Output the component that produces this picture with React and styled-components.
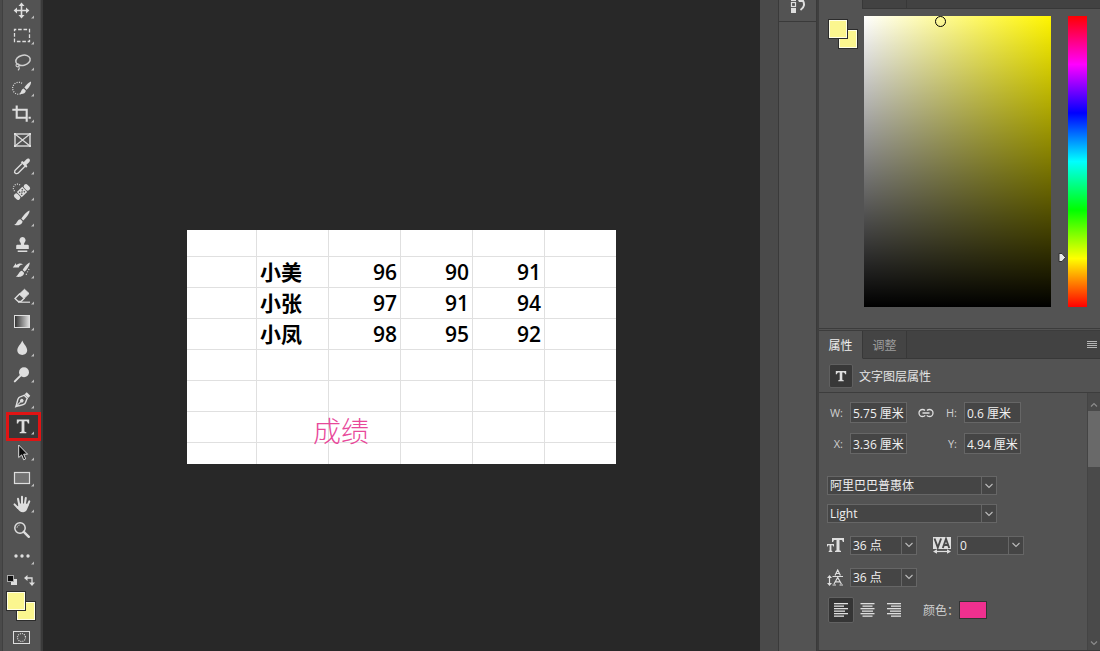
import React, { useState } from 'react';
import styled, { createGlobalStyle } from 'styled-components';

const GlobalStyle = createGlobalStyle`
  * {
    box-sizing: border-box;
  }
  body {
    margin: 0;
    background: #282828;
    font-family: 'Open Sans', 'Noto Sans CJK SC', sans-serif;
    font-size: 12px;
    color: #e4e4e4;
  }
  button, input, select {
    font: inherit;
    color: inherit;
  }
`;

const light = '#dedede';

const tools = [
  {
    name: 'Move',
    icon: (
      <>
        <path d="M11.5 6v13M5 12.5h13" stroke={light} strokeWidth="1.6" />
        <path d="M11.5 4.5l3 3.4h-6zM11.5 20.5l3-3.4h-6zM3.6 12.5l3.4-3v6zM19.4 12.5l-3.4-3v6z" fill={light} />
      </>
    ),
  },
  {
    name: 'Marquee',
    icon: <rect x="4.5" y="5.5" width="15" height="12" fill="none" stroke={light} strokeWidth="1.3" strokeDasharray="3.6 1.8" strokeDashoffset="1.8" />,
  },
  {
    name: 'Lasso',
    icon: (
      <g fill="none" stroke="#cfcfcf" strokeWidth="1.5">
        <ellipse cx="13" cy="10.3" rx="7.3" ry="5" transform="rotate(-14 13 10.3)" />
        <circle cx="7.6" cy="15.3" r="1.6" strokeWidth="1.1" />
        <path d="M9 16.4c.6 1.4 0 3-1 4" strokeWidth="1.1" />
      </g>
    ),
  },
  {
    name: 'Quick selection',
    icon: (
      <>
        <path d="M12 7.3A6 6 0 1 0 10.5 18" fill="none" stroke={light} strokeWidth="1.2" strokeDasharray="1 1.3" />
        <path d="M21 5.5c.4 2.8-2.4 6.6-4.4 8.2l-2.200-2.200C15.800 9.300 18.500 6.300 21 5.500z" fill={light} />
        <path d="M13.600 12.400l2.300 2.400c-.6 2.700-3.600 3.900-6.600 2.900 2-.6 1.600-4.600 4.300-5.300z" fill={light} />
      </>
    ),
  },
  {
    name: 'Crop',
    icon: <path d="M6.700 3.500v12.200h11M2.300 7.700h14.400v8M16.700 15v4.700M18.500 15.700h2.300" fill="none" stroke={light} strokeWidth="2.100" />,
  },
  {
    name: 'Frame',
    plain: true,
    icon: (
      <g fill="none" stroke={light}>
        <rect x="5" y="6" width="15" height="12" strokeWidth="1.400" />
        <path d="M5 6l15 12M20 6L5 18" strokeWidth="1.200" />
        <path d="M4 6h2M19 6h2M4 18h2M19 18h2" strokeWidth="2" />
      </g>
    ),
  },
  {
    name: 'Eyedropper',
    icon: (
      <>
        <path d="M12 9.500l-6.800 6.800c-.8.800-.4 1.700-.6 2.200.6.600.8.900 1.400 1.100.6-.1 1.500.2 2.300-.6L15 12.300" fill="none" stroke={light} strokeWidth="1.300" />
        <path d="M10.800 8.300l1.400-1.400 1.600 1.200 2.400-2.700c2.400-2.400 5.200.3 2.900 2.800l-2.700 2.600 1 1.600-1.300 1.300z" fill={light} />
      </>
    ),
  },
  {
    name: 'Healing brush',
    icon: (
      <>
        <path d="M10 5A4 4 0 1 0 5 11.500" fill="none" stroke={light} strokeWidth="1.200" strokeDasharray="1 1.200" />
        <g transform="rotate(-44 12 12)">
          <rect x="3" y="8.500" width="4.500" height="7" rx="2" fill={light} />
          <rect x="16.500" y="8.500" width="4.500" height="7" rx="2" fill={light} />
          <rect x="8.200" y="8.500" width="7.600" height="7" fill={light} />
          <path d="M9.500 9.800h1.400v1.400H9.500zM13.100 9.800h1.400v1.400h-1.400zM11.300 11.300h1.400v1.400h-1.400zM9.500 12.800h1.400v1.400H9.500zM13.100 12.800h1.400v1.400h-1.400z" fill="#535353" />
        </g>
      </>
    ),
  },
  {
    name: 'Brush',
    icon: (
      <>
        <path d="M19.500 4.500c.3 2.800-3.600 7.700-6.300 9.900l-1.900-1.900c1.900-2.800 5.400-7 8.200-8z" fill={light} />
        <path d="M10.500 13.300l2 2c.1 3.200-4.500 5-8.300 3.400 2.900-.5 2.800-5.200 6.300-5.400z" fill={light} />
      </>
    ),
  },
  {
    name: 'Clone stamp',
    icon: <path d="M12.500 5a3.200 3.200 0 0 1 2.300 5.300c-.7.900-.8 1.800-.7 2.500H18l.8.800V17H6.200v-3.400l.8-.8h3.900c.1-.7 0-1.600-.7-2.500A3.200 3.200 0 0 1 12.500 5zM7.700 18.500h9.600V20H7.700z" fill={light} />,
  },
  {
    name: 'History brush',
    icon: (
      <>
        <path d="M19.700 4.500c.3 2.600-2.600 7-5 9.200l-2-1.800c1.700-2.700 4.500-6.500 7-7.400z" fill={light} />
        <path d="M12 12.800l2 1.900c.2 3.400-4.500 5.100-8.300 3.700 3-.7 2.900-5.300 6.300-5.600z" fill={light} />
        <path d="M2.800 9.500L6 5v2c2.500-2 5.500-2 7-.6-2 0-3.700 1.200-4.300 3.100z" fill={light} />
        <path d="M19 11l-3.500 7" stroke={light} strokeWidth="1.200" strokeDasharray="1 1.700" />
      </>
    ),
  },
  {
    name: 'Eraser',
    icon: (
      <>
        <path d="M14.500 5.300l4.500 4.200-4.600 4.600-4.700-4.300z" fill={light} stroke={light} />
        <path d="M9.500 10l4.700 4.300-3 3H8l-3-2.800z" fill="none" stroke={light} strokeWidth="1.300" />
        <path d="M8 18.200h12" stroke={light} strokeWidth="1.200" />
      </>
    ),
  },
  {
    name: 'Gradient',
    icon: (
      <>
        <defs>
          <linearGradient id="toolGradient">
            <stop offset="0" stopColor="#2e2e2e" />
            <stop offset="1" stopColor="#e0e0e0" />
          </linearGradient>
        </defs>
        <rect x="4.500" y="5.500" width="15" height="12" fill="url(#toolGradient)" stroke={light} />
      </>
    ),
  },
  {
    name: 'Blur',
    icon: <path d="M12.300 4.500c1.200 3.500 4.900 6 4.900 9.800 0 6.200-9.900 6.200-9.900 0 0-3.800 3.800-6.300 5-9.800z" fill={light} />,
  },
  {
    name: 'Dodge',
    icon: (
      <>
        <circle cx="14" cy="10.200" r="5" fill={light} />
        <path d="M10.300 13.900l-5.500 5.500" stroke={light} strokeWidth="2" strokeLinecap="round" />
      </>
    ),
  },
  {
    name: 'Pen',
    icon: (
      <g transform="rotate(45 12.500 12)" fill="none" stroke={light}>
        <path d="M10 3.500h5v3h-5z" fill={light} stroke="none" />
        <path d="M10.300 7.500c-.5 2.300-2 3.600-2 5.500 0 2.200 2.700 5 4.200 8.300 1.500-3.300 4.200-6.100 4.200-8.300 0-1.900-1.500-3.200-2-5.500z" strokeWidth="1.400" />
        <circle cx="12.500" cy="13" r="1.300" fill={light} strokeWidth="1" />
        <path d="M12.500 14v7" strokeWidth="1" />
      </g>
    ),
  },
  {
    name: 'Type',
    marked: true,
    icon: <path d="M6.800 5.500h12.400v4h-1.400c-.2-1.700-.7-2.300-2.200-2.300h-1.200v9.700c0 .8.500 1.100 1.900 1.200v1.200H9.700v-1.200c1.400-.1 1.900-.4 1.900-1.200V7.200h-1.200c-1.500 0-2 .6-2.200 2.300H6.800z" fill={light} />,
  },
  {
    name: 'Path selection',
    icon: <path d="M8.700 5v12.500l3-2.600 2 4.900 2-1-2-4.600h3.900z" fill="#0c0c0c" stroke={light} strokeWidth="1" />,
  },
  {
    name: 'Rectangle',
    icon: <rect x="4.500" y="6.500" width="15" height="11" fill="#737373" stroke={light} strokeWidth="1.200" />,
  },
  {
    name: 'Hand',
    icon: (
      <>
        <path d="M9.300 13L8 6.800M12 12V4.800M14.800 12.500l1-6.500M17.300 14l2-4.600M8 16l-3.500-3.600" stroke={light} strokeWidth="2" strokeLinecap="round" />
        <path d="M8.300 11.500h8l2.200 1.800c-.9 3-1.800 6.900-5.300 6.900-3.800 0-4.700-2.300-7.200-5.700l2.300-.2z" fill={light} />
      </>
    ),
  },
  {
    name: 'Zoom',
    plain: true,
    icon: (
      <g fill="none" stroke={light}>
        <circle cx="10" cy="10" r="5.200" strokeWidth="1.500" />
        <path d="M7 10c0-1.700 1.200-3 2.800-3" strokeWidth="1" opacity=".6" />
        <path d="M13.800 13.800l5 5" strokeWidth="2.400" strokeLinecap="round" />
      </g>
    ),
  },
  {
    name: 'More tools',
    icon: (
      <g fill={light}>
        <circle cx="6" cy="12" r="1.700" />
        <circle cx="12" cy="12" r="1.700" />
        <circle cx="18" cy="12" r="1.700" />
      </g>
    ),
  },
];

const emptyRow = ['', '', '', '', '', ''];
const rows = [
  emptyRow,
  ['', '小美', '96', '90', '91', ''],
  ['', '小张', '97', '91', '94', ''],
  ['', '小凤', '98', '95', '92', ''],
  emptyRow,
  emptyRow,
  emptyRow,
  emptyRow,
];

function Chevron() {
  return (
    <ChevronBox>
      <svg width="10" height="6" viewBox="0 0 10 6">
        <path d="M1.500 1L5 4.500 8.500 1" fill="none" stroke="#bcbcbc" strokeWidth="1.100" />
      </svg>
    </ChevronBox>
  );
}

function Combo({ label, value, size }) {
  return (
    <ComboBox $size={size}>
      <select aria-label={label} defaultValue={value}>
        <option>{value}</option>
      </select>
      <Chevron />
    </ComboBox>
  );
}

function AlignIcon({ align }) {
  const widths = [14, 10, 14, 11, 14, 10];
  return (
    <svg width="15" height="14" viewBox="0 0 15 14">
      {widths.map((w, i) => {
        const x = align === 'left' ? 0 : align === 'right' ? 15 - w : (15 - w) / 2;
        return <rect key={i} x={x} y={i * 2.5} width={w} height="1.300" fill={light} />;
      })}
    </svg>
  );
}

export default function App() {
  const [tool, setTool] = useState('Type');
  const [align, setAlign] = useState('left');

  return (
    <Page>
      <GlobalStyle />
      <Toolbar>
        <ToolList>
          {tools.map(({ name, icon, plain, marked }) => (
            <Tool key={name} aria-label={name} $marked={marked} $active={tool === name} onClick={() => setTool(name)}>
              <svg width="24" height="24" viewBox="0 0 24 24" fill="none">
                {icon}
                {!plain && <path d="M24 17.500V20.500H21z" fill="#bdbdbd" />}
              </svg>
            </Tool>
          ))}
        </ToolList>
        <MiniRow>
          <svg width="28" height="12" viewBox="0 0 28 12">
            <rect x="4" y="4" width="6" height="6" fill={light} />
            <rect x="0.500" y="0.500" width="6" height="6" fill="#111" stroke="#aaa" />
            <path d="M20 3h5v6" fill="none" stroke={light} strokeWidth="1.300" />
            <path d="M20.500 0v6L17 3zM22 7.500h6L25 11z" fill={light} />
          </svg>
        </MiniRow>
        <Swatches>
          <Swatch aria-label="Background color" $back />
          <Swatch aria-label="Foreground color" />
        </Swatches>
        <MaskButton aria-label="Quick mask">
          <svg width="17" height="13" viewBox="0 0 17 13" fill="none" stroke={light}>
            <rect x="0.500" y="0.500" width="16" height="12" />
            <circle cx="8.500" cy="6.500" r="4" strokeWidth="1.200" strokeDasharray="1 1.090" />
          </svg>
        </MaskButton>
      </Toolbar>

      <Workspace>
        <Artboard>
          <Sheet>
            <tbody>
              {rows.map((row, i) => (
                <tr key={i}>
                  {row.map((cell, j) => (
                    <td key={j}>{cell}</td>
                  ))}
                </tr>
              ))}
            </tbody>
          </Sheet>
          <TextLayer>成绩</TextLayer>
        </Artboard>
      </Workspace>
      <Track />
      <Dock>
        <DockButton aria-label="History">
          <svg width="16" height="14" viewBox="0 0 16 14">
            <rect x="1.500" y="2.500" width="4" height="4" fill="none" stroke={light} strokeWidth="1.200" />
            <rect x="1" y="8" width="5" height="5" fill={light} />
            <path d="M1 0h5v1H1zM8 0h5v2H9z" fill={light} />
            <path d="M12.500 0c2.500 3.500 2 7.500-2 10" fill="none" stroke={light} strokeWidth="2" />
          </svg>
        </DockButton>
      </Dock>

      <Panels>
        <TopTabs>
          <TopTab $active />
          <TopTab />
        </TopTabs>
        <ColorPanel>
          <Swatches>
            <Swatch aria-label="Background" $back />
            <Swatch aria-label="Foreground" />
          </Swatches>
          <ColorField>
            <Marker />
          </ColorField>
          <HueBar>
            <HueHandle width="8" height="9" viewBox="0 0 8 9">
              <path d="M1 0.500h3L7.500 4.500 4 8.500H1z" fill="#e8e8e8" stroke="#333" />
            </HueHandle>
          </HueBar>
        </ColorPanel>

        <TabBar role="tablist">
          <Tab role="tab" $active>属性</Tab>
          <Tab role="tab">调整</Tab>
          <MenuButton aria-label="Panel menu">
            <svg width="10" height="8" viewBox="0 0 10 8">
              <path d="M0 .5h10M0 2.500h10M0 4.500h10M0 6.500h10" stroke="#b4b4b4" />
            </svg>
          </MenuButton>
        </TabBar>
        <LayerTitle>
          <LayerIcon>
            <svg width="12" height="12" viewBox="0 0 12 12">
              <path d="M.8 1h10.400v3.300h-1.200C9.800 3 9.400 2.500 8.200 2.500h-.9v6.700c0 .7.400.9 1.500 1v1H3.200v-1c1.100-.1 1.500-.3 1.500-1V2.500h-.9C2.600 2.500 2.200 3 2 4.300H.8z" fill={light} />
            </svg>
          </LayerIcon>
          文字图层属性
        </LayerTitle>

        <Properties>
          <Form>
            <SizeGrid>
              <label htmlFor="w">W:</label>
              <Field id="w" defaultValue="5.75 厘米" />
              <svg width="16" height="10" viewBox="0 0 16 10" fill="none" stroke={light} strokeWidth="1.300">
                <path d="M7 2.500C6 1.500 5.300 1.500 4.500 1.500a3.500 3.500 0 0 0 0 7c1 0 2-.3 2.700-1.200M9 2.500c1-1 1.700-1 2.500-1a3.500 3.500 0 0 1 0 7c-1 0-2-.3-2.700-1.200M4.500 5h7" />
              </svg>
              <label htmlFor="h">H:</label>
              <Field id="h" defaultValue="0.6 厘米" />
              <label htmlFor="x">X:</label>
              <Field id="x" defaultValue="3.36 厘米" />
              <span />
              <label htmlFor="y">Y:</label>
              <Field id="y" defaultValue="4.94 厘米" />
            </SizeGrid>

            <FontRows>
              <Combo label="Font family" value="阿里巴巴普惠体" size="170px" />
              <Combo label="Font style" value="Light" size="170px" />
            </FontRows>

            <MetricRow>
              <svg width="17" height="14" viewBox="0 0 17 14" fill={light}>
                <path d="M5 0h12v4h-1.200c-.2-1.500-.6-2-2-2h-1.300v9.700c0 .7.400.9 1.500 1V14H8v-1.300c1.100-.1 1.500-.3 1.500-1V2H8.200c-1.400 0-1.800.5-2 2H5z" />
                <path d="M0 6h7v2.500h-.8c-.1-1-.4-1.300-1.200-1.300h-.6v5c0 .5.300.6.900.7v1H1.700v-1c.6-.1.900-.2.900-.7v-5H2C1.200 7.200.9 7.500.8 8.500H0z" />
              </svg>
              <Combo label="Font size" value="36 点" size="67px" />
              <svg width="18" height="17" viewBox="0 0 18 17">
                <path d="M0 0h18v12H0z" fill={light} />
                <path d="M1.500 1.500l3.300 9 3.300-9M9.800 11l3.200-9 3.200 9M11 8h4" fill="none" stroke="#484848" strokeWidth="1.900" />
                <path d="M2 14.500h14" stroke={light} strokeWidth="1.200" />
                <path d="M0 14.500L4 12.300v4.400zM18 14.500L14 12.300v4.400z" fill={light} />
              </svg>
              <Combo label="Tracking" value="0" size="67px" />
            </MetricRow>
            <MetricRow>
              <svg width="17" height="17" viewBox="0 0 17 17" fill="none" stroke={light} strokeWidth="1.200">
                <path d="M2.500 8.500v6M8 6.500l2.700-5.500 2.700 5.500M9 4.500h3.500M5.500 7.500h10.500M7 15l3.700-6.500 3.700 6.500M8.500 12.800h4.500M5.500 16h3.500M12.500 16H16" />
                <path d="M2.500 6L5 9H0zM2.500 17L5 14H0z" fill={light} stroke="none" />
              </svg>
              <Combo label="Leading" value="36 点" size="67px" />
            </MetricRow>

            <AlignRow>
              {['left', 'center', 'right'].map((side) => (
                <AlignButton key={side} aria-label={side} $active={align === side} onClick={() => setAlign(side)}>
                  <AlignIcon align={side} />
                </AlignButton>
              ))}
              <label htmlFor="color">颜色：</label>
              <ColorButton id="color" />
            </AlignRow>
          </Form>
          <Scrollbar>
            <svg width="10" height="6" viewBox="0 0 10 6">
              <path d="M2 4.500L5 1.500 8 4.500" fill="none" stroke="#8c8c8c" strokeWidth="1.200" />
            </svg>
            <Thumb />
            <svg width="10" height="6" viewBox="0 0 10 6">
              <path d="M2 1.500L5 4.500 8 1.500" fill="none" stroke="#8c8c8c" strokeWidth="1.200" />
            </svg>
          </Scrollbar>
        </Properties>
      </Panels>
    </Page>
  );
}

const Page = styled.div`
  display: flex;
  height: 100vh;
  overflow: hidden;
`;

const Toolbar = styled.aside`
  display: flex;
  flex-direction: column;
  flex: none;
  width: 43px;
  background: #535353;
  border-left: 2px solid #4a4a4a;
  border-right: 2px solid #3a3a3a;
  box-shadow: inset 1px 0 #404040, inset -1px 0 #4a4a4a;
`;

/* the list is scrolled up by a few pixels under the top edge */
const ToolList = styled.div`
  display: grid;
  grid-auto-rows: 26px;
  align-items: center;
  margin-top: -3px;
`;

const Tool = styled.button`
  display: flex;
  align-items: center;
  justify-content: center;
  width: ${({ $marked }) => ($marked ? '35px' : '36px')};
  height: ${({ $marked }) => ($marked ? '29px' : '26px')};
  margin-left: ${({ $marked }) => ($marked ? '4px' : '2px')};
  padding: ${({ $marked }) => ($marked ? '0 3px 0 0' : '0')};
  border: ${({ $marked }) => ($marked ? '3px solid #e01414' : 'none')};
  background: ${({ $active }) => ($active ? '#383838' : 'transparent')};
  svg {
    flex: none;
  }
`;

const MiniRow = styled.div`
  display: flex;
  padding: 6px 0 4px 5px;
`;

const Swatches = styled.div`
  position: relative;
  flex: none;
  width: 30px;
  height: 30px;
  margin-left: 4px;
`;

const Swatch = styled.button`
  position: absolute;
  top: ${({ $back }) => ($back ? '10px' : '0')};
  left: ${({ $back }) => ($back ? '10px' : '0')};
  width: 20px;
  height: 20px;
  padding: 0;
  border: 1px solid #2c2c2c;
  background: #fbf68f;
  box-shadow: inset 0 0 0 1px #ffffe6;
`;

const MaskButton = styled.button`
  display: flex;
  margin: 10px 0 0 11px;
  padding: 0;
  border: none;
  background: none;
`;

const Workspace = styled.main`
  flex: 1;
  display: flex;
  justify-content: center;
  align-items: flex-start;
  padding-top: 230px;
  background: #282828;
`;

const Artboard = styled.div`
  position: relative;
  width: 429px;
  background: #fff;
`;

const Sheet = styled.table`
  width: 100%;
  table-layout: fixed;
  border-collapse: separate;
  border-spacing: 0;
  color: #000;
  font-size: 21px;
  line-height: 30px;
  font-weight: 600;
  td {
    width: 72px;
    height: 31px;
    padding: 0 3px;
    border-right: 1px solid #e0e0e0;
    border-bottom: 1px solid #e0e0e0;
    text-align: right;
  }
  td:first-child {
    width: 70px;
  }
  td:nth-child(2) {
    text-align: left;
  }
  td:last-child {
    width: 71px;
    border-right: none;
  }
  tr:first-child td {
    height: 27px;
  }
  tr:last-child td {
    height: 21px;
    border-bottom: none;
  }
`;

const TextLayer = styled.div`
  position: absolute;
  left: 126px;
  top: 180px;
  color: #e8489a;
  font-family: 'Noto Sans CJK SC', sans-serif;
  font-size: 28px;
  font-weight: 300;
  line-height: 40px;
`;

const Track = styled.div`
  flex: none;
  width: 18px;
  background: #4a4a4a;
`;

const Dock = styled.aside`
  flex: none;
  width: 39px;
  background: #535353;
  border-left: 1px solid #3a3a3a;
  border-right: 1px solid #3a3a3a;
`;

const DockButton = styled.button`
  display: flex;
  justify-content: center;
  width: 100%;
  height: 22px;
  padding: 0;
  border: none;
  border-bottom: 1px solid #3a3a3a;
  background: none;
`;

const Panels = styled.section`
  display: flex;
  flex-direction: column;
  flex: none;
  width: 283px;
  background: #535353;
  border-left: 2px solid #3f3f3f;
  border-bottom: 1px solid #3a3a3a;
`;

const TopTabs = styled.div`
  display: flex;
  height: 9px;
  background: #424242;
  border-bottom: 1px solid #383838;
`;

const TopTab = styled.div`
  width: 44px;
  height: 9px;
  background: ${({ $active }) => ($active ? '#535353' : 'transparent')};
  border-right: 1px solid #383838;
`;

const ColorPanel = styled.div`
  display: flex;
  height: 322px;
  padding: 7px 13px 21px 5px;
  border-bottom: 3px double #3c3c3c;
  ${Swatches} {
    margin: 3px 0 0 4px;
  }
`;

const ColorField = styled.div`
  position: relative;
  flex: 1;
  height: 291px;
  margin: 0 17px 0 6px;
  background: linear-gradient(to bottom, transparent, #000), linear-gradient(to right, #fff, #fff500);
`;

const Marker = styled.div`
  position: absolute;
  left: 71px;
  top: 0;
  width: 11px;
  height: 11px;
  border: 1px solid #000;
  border-radius: 50%;
`;

const HueBar = styled.div`
  position: relative;
  width: 19px;
  height: 291px;
  background: linear-gradient(to bottom, #f00, #f0f, #00f, #0ff, #0f0, #ff0, #f00);
`;

const HueHandle = styled.svg`
  position: absolute;
  left: -10px;
  top: 237px;
`;

const TabBar = styled.div`
  display: flex;
  flex: none;
  height: 28px;
  background: #424242;
`;

const Tab = styled.button`
  width: 44px;
  padding: 0;
  border: none;
  border-right: 1px solid #383838;
  border-bottom: 1px solid ${({ $active }) => ($active ? '#535353' : '#383838')};
  background: ${({ $active }) => ($active ? '#535353' : '#444')};
  color: ${({ $active }) => ($active ? '#f0f0f0' : '#9c9c9c')};
`;

const MenuButton = styled.button`
  display: flex;
  flex: 1;
  align-items: center;
  justify-content: flex-end;
  padding: 0 3px 0 0;
  border: none;
  border-bottom: 1px solid #383838;
  background: none;
`;

const LayerTitle = styled.h2`
  display: flex;
  flex: none;
  align-items: center;
  gap: 6px;
  height: 34px;
  margin: 0;
  padding-left: 10px;
  border-bottom: 1px solid #3d3d3d;
  font-size: 12px;
  font-weight: 400;
`;

const LayerIcon = styled.span`
  display: flex;
  align-items: center;
  justify-content: center;
  width: 24px;
  height: 24px;
  border: 1px solid #606060;
  border-radius: 2px;
  background: #383838;
`;

const Properties = styled.div`
  display: flex;
  flex: 1;
  min-height: 0;
`;

const Form = styled.div`
  flex: 1;
  padding: 9px 0 0 8px;
`;

const SizeGrid = styled.div`
  display: grid;
  grid-template-columns: 16px 57px 24px 12px 57px;
  grid-auto-rows: 21px;
  gap: 10px 7px;
  align-items: center;
  label {
    text-align: right;
    color: #d0d0d0;
    font-size: 11px;
  }
  svg {
    justify-self: center;
  }
`;

const Field = styled.input`
  width: 100%;
  height: 21px;
  padding: 0 2px;
  border: 1px solid #666;
  background: #454545;
  color: #f0f0f0;
  outline: none;
`;

const FontRows = styled.div`
  display: grid;
  gap: 9px;
  margin-top: 22px;
`;

const ComboBox = styled.div`
  display: flex;
  width: ${({ $size }) => $size};
  height: 19px;
  border: 1px solid #666;
  background: #454545;
  select {
    flex: 1;
    min-width: 0;
    padding: 0 2px;
    appearance: none;
    border: none;
    background: none;
    color: #f0f0f0;
    outline: none;
  }
`;

const ChevronBox = styled.span`
  display: flex;
  flex: none;
  align-items: center;
  justify-content: center;
  width: 15px;
  border-left: 1px solid #666;
`;

const MetricRow = styled.div`
  display: grid;
  grid-template-columns: 17px 67px 28px 67px;
  column-gap: 6px;
  align-items: center;
  height: 20px;
  margin-top: 12px;
  svg {
    justify-self: end;
  }
  ${ChevronBox} svg {
    justify-self: auto;
  }
`;

const AlignRow = styled.div`
  display: flex;
  align-items: center;
  margin: 10px 0 0 1px;
  label {
    margin-left: 17px;
    color: #d0d0d0;
  }
`;

const AlignButton = styled.button`
  display: flex;
  align-items: center;
  justify-content: center;
  width: 26px;
  height: 26px;
  padding: 0;
  border: 1px solid ${({ $active }) => ($active ? '#626262' : 'transparent')};
  border-radius: 2px;
  background: ${({ $active }) => ($active ? '#353535' : 'none')};
`;

const ColorButton = styled.button`
  width: 28px;
  height: 18px;
  padding: 0;
  border: 1px solid #333;
  background: #f0308f;
`;

const Scrollbar = styled.div`
  display: flex;
  flex-direction: column;
  align-items: center;
  width: 13px;
  padding: 9px 0 4px;
  background: #4a4a4a;
  border-left: 1px solid #444;
`;

const Thumb = styled.div`
  width: 100%;
  height: 56px;
  margin: 3px 0 auto;
  background: #696969;
`;
